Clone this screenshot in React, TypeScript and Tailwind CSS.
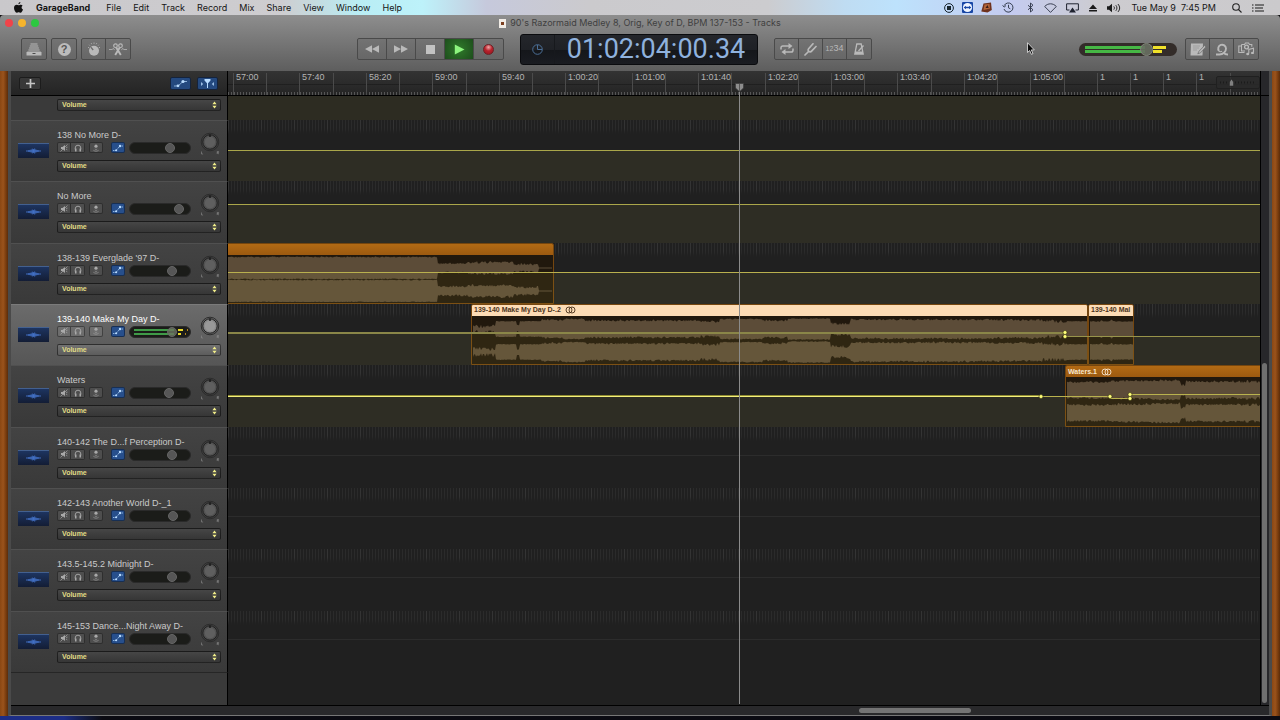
import type { ReactNode } from "react";
import clsx from "clsx";

type Point = [number, number];
type Segment = { to: number; amp: number; rough?: number };
type Clip = {
  left: number;
  width: number;
  title: string;
  selected?: boolean;
  looped?: boolean;
  segments: Segment[];
};
type Track = {
  name: string;
  volume: number;
  selected?: boolean;
  automation?: Point[];
  lineColor?: string;
  thick?: boolean;
  nodes?: Point[];
  clips?: Clip[];
};

const END = 4000;

const tracks: Track[] = [
  { name: "138 No More D-", volume: 69, automation: [[0, 30], [END, 30]], lineColor: "#aaa64a" },
  { name: "No More", volume: 87, automation: [[0, 23], [END, 23]], lineColor: "#aaa64a" },
  {
    name: "138-139 Everglade '97 D-",
    volume: 73,
    automation: [[0, 29], [END, 29]],
    lineColor: "#b9b04e",
    clips: [
      {
        left: -2,
        width: 328,
        title: "",
        segments: [
          { to: 210, amp: 11.5, rough: 1 },
          { to: 240, amp: 5.5, rough: 2 },
          { to: 286, amp: 7, rough: 2.5 },
          { to: 311, amp: 5, rough: 2.5 },
          { to: 325, amp: 0.4, rough: 0 },
        ],
      },
    ],
  },
  {
    name: "139-140 Make My Day D-",
    volume: 73,
    selected: true,
    automation: [[0, 29], [837, 29], [837, 32], [END, 32]],
    lineColor: "#98944a",
    nodes: [[837, 28], [837, 32]],
    clips: [
      {
        left: 243,
        width: 617,
        title: "139-140 Make My Day D-.2",
        selected: true,
        looped: true,
        segments: [
          { to: 23, amp: 5, rough: 4 },
          { to: 44, amp: 8, rough: 0.5 },
          { to: 47, amp: 4.5, rough: 3 },
          { to: 69, amp: 8, rough: 0.5 },
          { to: 91, amp: 10, rough: 2 },
          { to: 112, amp: 10.5, rough: 1 },
          { to: 228, amp: 9.5, rough: 2 },
          { to: 247, amp: 9, rough: 3 },
          { to: 290, amp: 10.5, rough: 1 },
          { to: 315, amp: 9.5, rough: 2 },
          { to: 358, amp: 11, rough: 1 },
          { to: 378, amp: 7, rough: 3 },
          { to: 520, amp: 10.5, rough: 2 },
          { to: 570, amp: 10, rough: 2 },
          { to: 594, amp: 10, rough: 4 },
          { to: 616, amp: 8, rough: 0.5 },
        ],
      },
      {
        left: 860,
        width: 46,
        title: "139-140 Mal",
        selected: true,
        segments: [
          { to: 11, amp: 8, rough: 0.8 },
          { to: 13, amp: 9, rough: 0.5 },
          { to: 21, amp: 8, rough: 0.8 },
          { to: 23, amp: 9.5, rough: 0.5 },
          { to: 44, amp: 8, rough: 0.8 },
        ],
      },
    ],
  },
  {
    name: "Waters",
    volume: 67,
    automation: [[0, 31], [882, 31], [882, 33], [902, 33], [902, 29], [END, 29]],
    lineColor: "#b9b24e",
    thick: true,
    nodes: [[813, 31], [882, 31], [902, 29], [902, 33]],
    clips: [
      {
        left: 837,
        width: 1200,
        title: "Waters.1",
        looped: true,
        segments: [
          { to: 45, amp: 9, rough: 2 },
          { to: 84, amp: 10, rough: 2.5 },
          { to: 114, amp: 10.5, rough: 2 },
          { to: 119, amp: 7, rough: 3 },
          { to: 165, amp: 9.5, rough: 2 },
          { to: 1200, amp: 10, rough: 3 },
        ],
      },
    ],
  },
  { name: "140-142 The D...f Perception D-", volume: 73 },
  { name: "142-143 Another World D-_1", volume: 75 },
  { name: "143.5-145.2 Midnight D-", volume: 73 },
  { name: "145-153 Dance...Night Away D-", volume: 73 },
];

const rulerLabels = [
  "57:00", "", "57:40", "", "58:20", "", "59:00", "", "59:40", "",
  "1:00:20", "", "1:01:00", "", "1:01:40", "", "1:02:20", "", "1:03:00", "",
  "1:03:40", "", "1:04:20", "", "1:05:00", "", "1", "1", "1", "1", "",
];
const menus = ["File", "Edit", "Track", "Record", "Mix", "Share", "View", "Window", "Help"];

// repeatable noise so that the wave forms look the same on every render
const noise = (n: number) => {
  const s = Math.sin(n * 12.9898) * 43758.5453;
  return s - Math.floor(s);
};

function channelPath(segments: Segment[], center: number, seed: number) {
  const top: string[] = [];
  const bottom: string[] = [];
  let x = 1;
  for (const { to, amp, rough = 1 } of segments) {
    for (; x <= to; x++) {
      top.push(`${x},${(center - amp + noise(x + seed) * rough).toFixed(1)}`);
      bottom.unshift(`${x},${(center + amp - noise(x * 2 + seed) * rough).toFixed(1)}`);
    }
  }
  return `M${top.join(" ")} ${bottom.join(" ")}Z`;
}

function automationArea(points: Point[]) {
  return `M${points.map((p) => p.join(",")).join(" ")} ${END},100 0,100Z`;
}

function LoopGlyph() {
  return (
    <svg className="h-2 w-[11px] shrink-0" viewBox="0 0 11 8" fill="none" stroke="currentColor" strokeWidth="0.9">
      <circle cx="4" cy="4" r="3" />
      <circle cx="7" cy="4" r="3" />
    </svg>
  );
}

function ClipRegion({ clip }: { clip: Clip }) {
  return (
    <div
      className="absolute inset-y-0 flex flex-col overflow-hidden rounded-t-[2px] border border-[#75460f] bg-[#21180d]"
      style={{ left: clip.left, width: clip.width }}
    >
      <div
        className={clsx(
          "flex h-[11px] shrink-0 items-center gap-1 pl-[2px] text-[7px] font-bold whitespace-nowrap",
          clip.selected ? "bg-[#fddcb5] text-[#4b321b]" : "bg-linear-to-b from-[#b26a14] to-[#9c5a10] text-[#f7e7cf]",
        )}
      >
        {clip.title}
        {clip.looped && <LoopGlyph />}
      </div>
      <svg className="mt-px h-[46px] w-full shrink-0" fill="#5c4c38">
        <path d={channelPath(clip.segments, 12, 3)} />
        <path d={channelPath(clip.segments, 35, 71)} />
      </svg>
    </div>
  );
}

function Lane({ track }: { track: Track }) {
  const { automation, clips = [], nodes = [] } = track;
  return (
    <div className="relative min-w-0 flex-1 overflow-hidden bg-[#202020]">
      <div className="h-[14px] bg-[repeating-linear-gradient(90deg,#343434_0_1px,transparent_1px_33px),repeating-linear-gradient(90deg,#2b2b2b_0_1px,transparent_1px_3px)] mask-b-from-60%" />
      {clips.map((clip) => (
        <ClipRegion key={clip.left} clip={clip} />
      ))}
      <svg className="absolute inset-0 size-full">
        {automation ? (
          <>
            <path d={automationArea(automation)} fill="#d6d25e" fillOpacity="0.08" />
            <polyline
              points={automation.map(([x, y]) => `${x},${y + 0.5}`).join(" ")}
              fill="none"
              stroke={track.lineColor}
            />
            {track.thick && (
              <g>
                <rect y="30" width="813" height="2" fill="#8f8b32" />
                <rect y="31" width="813" height="1" fill="#f4f07c" />
              </g>
            )}
            {track.selected && <rect y="28" width="837" height="2" fill="#8a8648" />}
            {nodes.map(([x, y]) => (
              <circle key={`${x}-${y}`} cx={x} cy={y + 0.5} r="2" fill="#ffff7a" stroke="#33310f" strokeWidth="0.6" />
            ))}
          </>
        ) : (
          <rect y="28" width={END} height="1" fill="#2c2c2c" />
        )}
      </svg>
    </div>
  );
}

function AutomationGlyph() {
  return (
    <svg className="h-2 w-3" viewBox="0 0 12 8" fill="#b9dcff" stroke="#b9dcff">
      <path d="M1 6.5h3L8 2h3" fill="none" strokeWidth="0.7" strokeDasharray="1.5 0.6" />
      <circle cx="4.2" cy="6.2" r="1" stroke="none" />
      <circle cx="8" cy="2" r="1.2" stroke="none" />
    </svg>
  );
}

function MiniButton({ label, className, children }: { label: string; className?: string; children: ReactNode }) {
  return (
    <button
      aria-label={label}
      className={clsx("flex h-[11px] w-[14px] items-center justify-center border border-black/40 text-[#a9a9a9]", className)}
    >
      {children}
    </button>
  );
}

function VolumePopup({ name, selected }: { name: string; selected?: boolean }) {
  return (
    <div className="relative h-3 w-[164px]">
      <select
        aria-label={`${name} automation parameter`}
        className={clsx(
          "block h-3 w-full appearance-none rounded-[2px] border border-black/50 px-1 text-[7px] leading-[10px] font-bold text-[#e0dd86]",
          selected ? "bg-linear-to-b from-[#727272] to-[#5c5c5c]" : "bg-linear-to-b from-[#464646] to-[#363636]",
        )}
      >
        <option>Volume</option>
        <option>Pan</option>
      </select>
      <svg className="pointer-events-none absolute top-[2px] right-1 h-2 w-[5px]" viewBox="0 0 5 8" fill="#f2ef8a">
        <path d="M2.5 0.6 4.6 3.2H0.4ZM2.5 7.4 4.6 4.8H0.4Z" />
      </svg>
    </div>
  );
}

function TrackFader({ track }: { track: Track }) {
  return (
    <div className="relative ml-1 h-3 w-[62px] overflow-hidden rounded-full border border-[#2a2a2a] bg-[#1b1c19]">
      {track.selected && (
        <div className="flex h-full flex-col justify-center gap-[2px] pl-1">
          <div className="flex gap-1">
            <i className="h-[2px] w-10 bg-[#3f9a48]" />
            <i className="h-[2px] w-[5px] bg-[#e8d928]" />
            <i className="h-[2px] w-px bg-[#b08420]" />
          </div>
          <div className="flex gap-1">
            <i className="h-[2px] w-10 bg-[#3f9a48]" />
            <i className="h-[2px] w-[3px] bg-[#e8d928]" />
            <i className="h-[2px] w-px bg-[#b08420]" />
          </div>
        </div>
      )}
      <input
        type="range"
        aria-label={`${track.name} volume`}
        defaultValue={track.volume}
        className={clsx(
          "absolute inset-0 size-full appearance-none bg-transparent",
          "[&::-webkit-slider-thumb]:size-[10px] [&::-webkit-slider-thumb]:appearance-none [&::-webkit-slider-thumb]:rounded-full [&::-webkit-slider-thumb]:border [&::-webkit-slider-thumb]:border-[#666]",
          track.selected ? "[&::-webkit-slider-thumb]:bg-[#6d7562]/80" : "[&::-webkit-slider-thumb]:bg-[#565656]",
        )}
      />
    </div>
  );
}

function PanKnob({ selected }: { selected?: boolean }) {
  return (
    <button aria-label="Pan" className="mt-[9px] ml-[10px] h-[26px] w-5">
      <svg viewBox="0 0 20 26" className="h-[26px] w-5" fill="none">
        <circle cx="10" cy="12" r="8.8" stroke="#2c2c2c" />
        <circle cx="10" cy="12" r="7.2" fill={selected ? "#8a8a8a" : "#525252"} stroke="#222" />
        <circle cx="10" cy="12" r="5.2" fill={selected ? "#989898" : "#5f5f5f"} />
        <path d="M10 4.500v2.500" stroke="#151515" strokeWidth="1.400" />
        <path d="M1.500 21.500v2.500h1.600M17.200 24v-2.500h1.400v1.200h-1.300l1.600 1.300" stroke="#8f8f8f" strokeWidth="0.600" />
      </svg>
    </button>
  );
}

function TrackHeader({ track }: { track: Track }) {
  const face = "bg-white/8";
  return (
    <div
      className={clsx(
        "flex w-[217px] shrink-0 border-t border-r border-r-black",
        track.selected
          ? "border-t-[#7a7a7a] bg-linear-to-b from-[#6b6b6b] to-[#565656]"
          : "border-t-[#505050] bg-linear-to-b from-[#434343] to-[#393939]",
      )}
    >
      <div className="mt-[22px] ml-[7px] flex h-[15px] w-[31px] shrink-0 items-center justify-center border-t border-[#43608f] bg-linear-to-b from-[#1d3460] to-[#131d35]">
        <svg className="h-2 w-[15px]" viewBox="0 0 19 8" stroke="#4677d0" strokeWidth="1.1">
          <path d="M0 4h19M3.5 3v2M5 2.6v2.8M6.500 2v4M8 1v6M9.500 1.600v4.800M11 .8v6.400M12.500 2v4M14 2.700v2.600M15.500 3.200v1.600" />
        </svg>
      </div>
      <div className="ml-2 flex flex-col pt-2">
        <h2
          className={clsx(
            "text-[9px] leading-[13px] whitespace-nowrap",
            track.selected ? "text-white" : "text-[#cacaca]",
          )}
        >
          {track.name}
        </h2>
        <div className="flex h-3 items-start">
          <MiniButton label="Mute" className={clsx(face, "rounded-l-[2px]")}>
            <svg className="size-2" viewBox="0 0 8 8" fill="currentColor" stroke="currentColor">
              <path d="M1 3h1.500L5 1v6L2.500 5H1Z" stroke="none" />
              <path d="M.5 7.500 7.500.5M6 3.500l1.500-.4M6 5l1.300.8" fill="none" strokeWidth="0.700" />
            </svg>
          </MiniButton>
          <MiniButton label="Solo" className={clsx(face, "rounded-r-[2px] border-l-0")}>
            <svg className="size-2" viewBox="0 0 8 8" fill="currentColor" stroke="currentColor">
              <path d="M1.200 5.500V4a2.800 2.800 0 0 1 5.600 0v1.500" fill="none" strokeWidth="0.900" />
              <path d="M1 4.500h1.500v3H1ZM5.500 4.500H7v3H5.500Z" stroke="none" />
            </svg>
          </MiniButton>
          <MiniButton label="Input monitoring" className={clsx(face, "ml-1 rounded-[2px]")}>
            <svg className="size-2" viewBox="0 0 8 8" fill="none" stroke="currentColor" strokeWidth="0.600">
              <circle cx="4" cy="2.200" r="1.600" fill="currentColor" stroke="none" />
              <path d="M2.800 5c.8.600 1.600.600 2.400 0M1.400 6.300c1.800 1.200 3.400 1.200 5.200 0" />
            </svg>
          </MiniButton>
          <MiniButton label="Automation" className="ml-2 rounded-[2px] bg-[#274f8c]">
            <AutomationGlyph />
          </MiniButton>
          <TrackFader track={track} />
        </div>
        <div className="mt-[6px]">
          <VolumePopup name={track.name} selected={track.selected} />
        </div>
      </div>
      <div className="-ml-[31px]">
        <PanKnob selected={track.selected} />
      </div>
    </div>
  );
}

function MenuBar() {
  return (
    <header className="flex h-[15px] items-center bg-[linear-gradient(90deg,#c9c8cb_0%,#cecdd0_22%,#b9edf4_28%,#bdf2fa_33%,#c6c9dc_38%,#cbcacd_46%,#cccccf_60%,#bfdcf2_66%,#bde2fc_70%,#c4cbf0_79%,#cdccd0_86%,#cbcacc_100%)] px-[14px] font-[Inter,sans-serif] text-[9px] text-[#151515]">
      <svg className="h-[11px] w-[9px]" viewBox="0 0 9 11" fill="#111">
        <path d="M6.400 0c.1 1.200-.9 2.300-2 2.300C4.300 1.200 5.300.1 6.400 0ZM8.600 3.700C7.100 4.600 7.300 6.800 9 7.500 8.600 8.800 7.600 10.700 6.500 10.700c-.8 0-1-.5-1.900-.5s-1.200.5-1.900.5C1.400 10.700 0 8.200 0 6.100c0-2.200 1.400-3.300 2.700-3.300.8 0 1.500.5 2 .5s1.200-.6 2.200-.6c.7 0 1.300.4 1.700 1Z" />
      </svg>
      <nav className="ml-[13px] flex items-center gap-3">
        <button className="mr-1 font-bold">GarageBand</button>
        {menus.map((menu) => (
          <button key={menu}>{menu}</button>
        ))}
      </nav>
      <div className="ml-auto flex items-center gap-[10px]">
        <svg className="size-[10px]" viewBox="0 0 10 10" fill="none" stroke="#16232b">
          <circle cx="5" cy="5" r="4.400" />
          <path d="M3 3h4v4H3Z" fill="#16232b" stroke="none" />
        </svg>
        <svg className="-mx-[2px] size-[11px]" viewBox="0 0 11 11">
          <rect width="11" height="11" rx="1" fill="#1746a5" />
          <circle cx="5.500" cy="5.500" r="4.600" fill="#eef4ff" />
          <path d="M1.600 5.500 4 3.700v1.100h3V3.700l2.400 1.800L7 7.300V6.200H4v1.100Z" fill="#1746a5" />
        </svg>
        <svg className="size-[11px]" viewBox="0 0 11 11">
          <path d="M2.500 1.500 10 .5 10.800 8 6.500 10.500.3 9.500Z" fill="#6f321e" />
          <path d="M3.500 2.500 8.500 2l.5 4.500-6.500 1.500Z" fill="#b5663a" />
          <path d="M4.500 6 6.500 3l1.200 3Z" fill="#3a1b16" />
        </svg>
        <svg className="h-[11px] w-3" viewBox="0 0 12 11" fill="none" stroke="#26303f" strokeWidth="0.900">
          <path d="M2.200 3.600A4.600 4.600 0 1 1 2 7M.6 3.400l1.600 1.700L4 3.500M6.500 2.800v3l1.800 1" />
        </svg>
        <svg className="ml-[3px] h-[11px] w-[7px]" viewBox="0 0 7 11" fill="none" stroke="#2b3244" strokeWidth="0.900">
          <path d="M1 3.200 6 7.800 3.500 10V1L6 3.200 1 7.800" />
        </svg>
        <svg className="h-[10px] w-[13px]" viewBox="0 0 13 10" fill="none" stroke="#2b3244" strokeWidth="0.900">
          <path d="M.7 3.500C4-.1 9-.1 12.300 3.500L6.500 9.400Z" />
        </svg>
        <svg className="-ml-px h-[10px] w-[13px]" viewBox="0 0 13 10" fill="none" stroke="#1f2330">
          <path d="M3.500 7H.6V.8h11.800V7H9.500" />
          <path d="M6.500 4.500 10 9.500H3Z" fill="#1f2330" stroke="none" />
        </svg>
        <svg className="h-2 w-2" viewBox="0 0 8 8" fill="#1a1a1a">
          <path d="M4 0.500 8 5H0ZM0 6h8v1.500H0Z" />
        </svg>
        <svg className="h-[10px] w-[14px]" viewBox="0 0 14 10" fill="none" stroke="#1a1a1a" strokeWidth="0.900">
          <path d="M0 3.300h2L5 .8v8.400L2 6.700H0Z" fill="#1a1a1a" stroke="none" />
          <path d="M6.800 3.400c.8 1 .8 2.200 0 3.200M8.800 2.200c1.500 1.800 1.500 3.800 0 5.600M10.900 1c2.300 2.600 2.300 5.400 0 8" />
        </svg>
        <time className="whitespace-pre">Tue May 9  7:45 PM</time>
        <svg className="ml-[6px] size-[10px]" viewBox="0 0 10 10" fill="none" stroke="#222" strokeWidth="1.100">
          <circle cx="4" cy="4" r="3.300" />
          <path d="m6.500 6.500 3 3" />
        </svg>
        <svg className="mr-[2px] h-2 w-3" viewBox="0 0 12 8" stroke="#1a1a1a" strokeWidth="1.200">
          <path d="M0 1h1.500M3 1h9M0 4h1.500M3 4h8M0 7h1.500M3 7h9" />
        </svg>
      </div>
    </header>
  );
}

function ToolGroup({ children }: { children: ReactNode }) {
  return (
    <div className="flex h-[22px] divide-x divide-[#4a4a4a] overflow-hidden rounded-[2px] border border-[#4a4a4a] bg-linear-to-b from-[#737373] to-[#676767] text-[#b9b9b9]">
      {children}
    </div>
  );
}

function ToolButton({ label, wide, className, children }: { label: string; wide?: boolean; className?: string; children: ReactNode }) {
  return (
    <button aria-label={label} className={clsx("flex h-full items-center justify-center", wide ? "w-[29px]" : "w-6", className)}>
      {children}
    </button>
  );
}

function Toolbar() {
  return (
    <div className="flex h-10 items-center px-[21px] pb-1">
      <div className="flex w-[336px] shrink-0 gap-1">
        <ToolGroup>
          <ToolButton label="Library">
            <svg className="h-[13px] w-4" viewBox="0 0 16 13" fill="none" stroke="currentColor">
              <path d="M4.500 1h7M3.800 3h8.400M3.100 5h9.800M2.400 7h11.200" strokeWidth="1.100" />
              <path d="M1.500 8.500h13l1 1v3H.5v-3Z" fill="currentColor" stroke="none" />
              <path d="M6.500 10.500h3" stroke="#4c4c4c" />
            </svg>
          </ToolButton>
        </ToolGroup>
        <ToolGroup>
          <ToolButton label="Quick help">
            <span className="flex size-[13px] items-center justify-center rounded-full bg-[#bcbcbc] text-[11px] leading-none font-bold text-[#555]">?</span>
          </ToolButton>
        </ToolGroup>
        <ToolGroup>
          <ToolButton label="Smart controls">
            <svg className="size-[14px]" viewBox="0 0 14 14" fill="currentColor" stroke="currentColor">
              <circle cx="7" cy="8.800" r="5" stroke="none" />
              <path d="M1 5.200l.8.500M2.200 2.800l.6.700M4.300 1.300l.4.900M7 .6v1.100M9.700 1.300l-.4.900M11.800 2.800l-.6.700M13 5.200l-.8.500" />
              <path d="M3.800 5.200 6.200 8" stroke="#6b6b6b" strokeWidth="1.300" />
            </svg>
          </ToolButton>
          <ToolButton label="Editors">
            <svg className="h-[13px] w-[18px]" viewBox="0 0 18 13" fill="none" stroke="currentColor" strokeWidth="1.200">
              <circle cx="6.500" cy="2.700" r="1.800" />
              <circle cx="11.500" cy="2.700" r="1.800" />
              <path d="M7.200 4.400 11.800 12M10.800 4.400 6.200 12" strokeWidth="1.900" />
              <path d="M0 6.500h3l1.500-1 1 1.600M18 6.500h-3l-1.500-1-1 1.600" strokeWidth="0.800" />
            </svg>
          </ToolButton>
        </ToolGroup>
      </div>

      <div className="flex shrink-0 items-center gap-4">
        <ToolGroup>
          <ToolButton label="Rewind" wide>
            <svg className="h-2 w-[14px]" viewBox="0 0 14 8" fill="currentColor">
              <path d="M7 .3v7.400L0 4ZM14 .3v7.400L7 4Z" />
            </svg>
          </ToolButton>
          <ToolButton label="Forward" wide>
            <svg className="h-2 w-[14px]" viewBox="0 0 14 8" fill="currentColor">
              <path d="M0 .3v7.400L7 4ZM7 .3v7.400L14 4Z" />
            </svg>
          </ToolButton>
          <ToolButton label="Stop" wide>
            <span className="size-[9px] bg-[#c2c2c2]" />
          </ToolButton>
          <ToolButton label="Play" wide className="bg-[radial-gradient(circle,#2f7a2a,#1d4d1c)] text-[#8df57e]">
            <svg className="size-[11px]" viewBox="0 0 11 11" fill="currentColor">
              <path d="M.8.500v10L10.500 5.500Z" />
            </svg>
          </ToolButton>
          <ToolButton label="Record" wide>
            <span className="size-[11px] rounded-full border border-[#6d2226] bg-[radial-gradient(circle_at_50%_25%,#f0a9a9,#b8222c_45%,#96151f)]" />
          </ToolButton>
        </ToolGroup>

        <div className="flex h-[31px] w-[238px] items-center rounded-[3px] border border-[#0a0b0e] bg-[linear-gradient(#24262b_0%,#1f2126_50%,#14161a_51%,#1a1c21_100%)] text-[#8fb2de]">
          <button aria-label="Display mode" className="flex h-full w-[34px] items-center justify-center border-r border-[#17191d]">
            <svg className="size-[11px]" viewBox="0 0 11 11" fill="none" stroke="#4b6f97">
              <circle cx="5.500" cy="5.500" r="4.800" />
              <path d="M5.500 1v4.500H10" />
            </svg>
          </button>
          <output className="flex-1 text-center font-[Roboto,sans-serif] text-[27px] leading-none">01:02:04:00.34</output>
        </div>

        <ToolGroup>
          <ToolButton label="Cycle">
            <svg className="h-3 w-[14px]" viewBox="0 0 14 12" fill="none" stroke="currentColor" strokeWidth="1.500">
              <path d="M1 6.500V4.800C1 3.700 1.700 3 2.800 3H9M13 5.500v1.700c0 1.100-.7 1.800-1.800 1.800H5" />
              <path d="M8.500 0v6l4-3ZM5.500 6v6l-4-3Z" fill="currentColor" stroke="none" />
            </svg>
          </ToolButton>
          <ToolButton label="Tuner">
            <svg className="size-[13px]" viewBox="0 0 13 13" fill="none" stroke="currentColor" strokeWidth="1.700" strokeLinecap="round">
              <path d="M1 12 4.500 8.500M9 .8 4.800 5.500c-.9 1-.9 2 0 2.800s2 .8 2.800-.2L12 3.500" />
            </svg>
          </ToolButton>
          <ToolButton label="Count in">
            <span className="text-[7px]">12</span>
            <span className="text-[9px]">34</span>
          </ToolButton>
          <ToolButton label="Metronome">
            <svg className="size-3" viewBox="0 0 12 12" fill="none" stroke="currentColor" strokeWidth="1.300">
              <path d="M3.800 1h4.400l2 10H1.800Z" />
              <path d="M2.200 8.500h7.600l.4 2.500H1.800Z" fill="currentColor" stroke="none" />
              <path d="M5.500 8 10.500 2.500" />
            </svg>
          </ToolButton>
        </ToolGroup>
      </div>

      <div className="ml-auto flex shrink-0 items-center gap-2">
        <div className="relative h-[13px] w-[98px] overflow-hidden rounded-full bg-[#332c29]">
          <div className="flex h-full flex-col justify-center gap-px pl-[6px]">
            <div className="flex gap-2">
              <i className="h-[3px] w-[60px] bg-[#46b845]" />
              <i className="h-[3px] w-[13px] bg-[#f0e12a]" />
            </div>
            <div className="flex gap-2">
              <i className="h-[3px] w-[60px] bg-[#46b845]" />
              <i className="h-[3px] w-[9px] bg-[#f0e12a]" />
            </div>
          </div>
          <input
            type="range"
            aria-label="Master volume"
            defaultValue={72}
            className="absolute inset-0 size-full appearance-none bg-transparent [&::-webkit-slider-thumb]:size-[13px] [&::-webkit-slider-thumb]:appearance-none [&::-webkit-slider-thumb]:rounded-full [&::-webkit-slider-thumb]:border [&::-webkit-slider-thumb]:border-[#80867a] [&::-webkit-slider-thumb]:bg-[#686f62]/90"
          />
        </div>
        <ToolGroup>
          <ToolButton label="Note pad">
            <svg className="h-[13px] w-4" viewBox="0 0 16 13" fill="currentColor">
              <path d="M1 .5h12l-.5 12H.5Z" />
              <path d="M3 3h7M3 5h6M3 7h4" stroke="#8f8f8f" strokeWidth="0.600" />
              <path d="M14.800 2.300 9 8.200l-1.200 2.600 2.700-1L15.800 4Z" stroke="#6a6a6a" strokeWidth="0.700" />
            </svg>
          </ToolButton>
          <ToolButton label="Loop browser">
            <svg className="h-[13px] w-[14px]" viewBox="0 0 14 13" fill="none" stroke="currentColor" strokeWidth="1.900">
              <path d="M1 11.500h3.500c3.500 0 6.500-2.500 6.500-6A3.900 3.900 0 1 0 4 8" />
              <path d="M4 8c.8 1 2.200 1 2.900 0" strokeWidth="1.200" />
              <path d="M9 10c.8 1.200 2 1.600 4 1.500" />
            </svg>
          </ToolButton>
          <ToolButton label="Media browser">
            <svg className="h-[14px] w-[17px]" viewBox="0 0 17 14" fill="none" stroke="currentColor" strokeWidth="1.100">
              <path d="M3.500 4H.8v6.500h5.700M3.500 2.500h3L7.500 1h3l1 1.500h2.300v2.200M3.500 2.500V9H7" />
              <circle cx="8.500" cy="5" r="1.900" strokeWidth="1.400" />
              <path d="M10.800 11.500V7.500l4.700-1.200v4.200" />
              <ellipse cx="9.700" cy="12" rx="1.500" ry="1.200" fill="currentColor" stroke="none" />
              <ellipse cx="14.500" cy="10.900" rx="1.500" ry="1.200" fill="currentColor" stroke="none" />
            </svg>
          </ToolButton>
        </ToolGroup>
      </div>
    </div>
  );
}

function Ruler() {
  return (
    <div className="flex h-[25px] shrink-0 border-b border-black bg-linear-to-b from-[#333] to-[#242424]">
      <div className="flex w-[217px] shrink-0 items-center border-r border-black pr-[9px] pl-2">
        <button aria-label="Add track" className="flex h-[13px] w-[22px] items-center justify-center rounded-[2px] border border-[#1c1c1c] bg-[#383838]">
          <svg className="size-[9px]" viewBox="0 0 9 9" stroke="#c4c4c4" strokeWidth="1.700">
            <path d="M4.500 0v9M0 4.500h9" />
          </svg>
        </button>
        <button aria-label="Show automation" className="ml-auto flex h-[13px] w-[21px] items-center justify-center rounded-[2px] border border-[#15233b] bg-[#24497f]">
          <svg className="h-[9px] w-[15px]" viewBox="0 0 15 9" fill="#b9dcff">
            <path d="M1 7h4l5-4.500h4" fill="none" stroke="#b9dcff" strokeWidth="0.700" />
            <circle cx="5" cy="6.800" r="1.400" />
            <circle cx="10" cy="2.500" r="1.600" />
          </svg>
        </button>
        <button aria-label="Catch playhead" className="ml-[6px] flex h-[13px] w-[21px] items-center justify-center rounded-[2px] border border-[#15233b] bg-[#24497f]">
          <svg className="h-[9px] w-[15px]" viewBox="0 0 15 9" fill="#b9dcff">
            <path d="M4.500 0h6v1.500L8 4.200V9H7V4.200L4.500 1.500Z" />
            <path d="M1 3v4l2.200-2ZM14 3v4l-2.200-2Z" opacity="0.800" />
          </svg>
        </button>
      </div>
      <div className="relative flex min-w-0 flex-1 overflow-hidden border-r border-black">
        <div className="absolute inset-x-0 bottom-0 h-[3px] bg-[repeating-linear-gradient(90deg,#555_0_1px,transparent_1px_3px)]" />
        <div className="absolute inset-x-0 top-[13px] h-px bg-black/25" />
        {rulerLabels.map((label, i) => (
          <span
            key={i}
            className="absolute top-[2px] bottom-0 border-l border-[#4b4b4b] pl-[2px] text-[9px] leading-[9px] text-[#b4b4b4]"
            style={{ left: 5 + Math.round(i * 33.22) }}
          >
            {label}
          </span>
        ))}
        <label className="absolute top-[5px] right-0 flex h-[13px] w-11 items-center justify-center rounded-[2px] border border-[#202020] bg-[#2a2a2a]/80">
          <input type="range" aria-label="Horizontal zoom" className="sr-only" defaultValue={35} />
          <svg className="h-[9px] w-10" viewBox="0 0 40 9" fill="none" stroke="#1b1b1b">
            <path d="M2 4.500h36" strokeDasharray="1 2" strokeWidth="2" />
            <path d="M11.500 4 13.500 1l2 3v4h-4Z" fill="#808080" stroke="#222" strokeWidth="0.500" />
          </svg>
        </label>
      </div>
      <div className="w-2 shrink-0 bg-[#27272a]" />
    </div>
  );
}

function Playhead() {
  return (
    <div className="pointer-events-none absolute top-[12px] bottom-[11px] left-[724px] flex w-[9px] flex-col items-center">
      <svg className="h-[9px] w-[9px] shrink-0" viewBox="0 0 9 9">
        <path d="M.5.500h8v4.500L4.500 8.700.5 5Z" fill="#8d8d8d" stroke="#3a3a3a" strokeWidth="0.700" />
        <path d="M4.500 1v7" stroke="#555" />
      </svg>
      <span className="w-px flex-1 bg-[#8b8b8b]" />
    </div>
  );
}

const wood = "w-2 shrink-0 bg-[linear-gradient(90deg,#8a4713,#9a531c_40%,#7d3f10_70%,#5a2c0a)]";

export default function App() {
  return (
    <div className="flex min-h-screen flex-col bg-[#0d0d10] font-['Liberation_Sans',Arial,sans-serif] select-none">
      <MenuBar />
      <div className="relative h-14 rounded-t-[4px] bg-linear-to-b from-[#8e8e8e] to-[#5e5e5e]">
        <div className="grid h-4 grid-cols-[1fr_auto_1fr] items-center px-[5px]">
          <div className="flex gap-[5px]">
            <button aria-label="Close" className="size-2 rounded-full bg-[#f0444a]" />
            <button aria-label="Minimize" className="size-2 rounded-full bg-[#f6b42c]" />
            <button aria-label="Zoom" className="size-2 rounded-full bg-[#2cc840]" />
          </div>
          <h1 className="flex items-center gap-1 font-[Inter,sans-serif] text-[9px] whitespace-nowrap text-[#3f3f3f]">
            <span className="flex h-[9px] w-[7px] items-center justify-center bg-[#f1ece6]">
              <span className="size-[3px] bg-[#7c3f1f]" />
            </span>
            90's Razormaid Medley 8, Orig, Key of D, BPM 137-153 - Tracks
          </h1>
        </div>
        <Toolbar />
        <svg className="absolute top-[27px] left-[1027px] h-[13px] w-2" viewBox="0 0 8 13">
          <path d="M.5.700v9.800l2.200-2 1.700 3.800 1.600-.7-1.700-3.700h3Z" fill="#0a0a0a" stroke="#e8e8e8" strokeWidth="0.800" />
        </svg>
      </div>

      <div className="flex flex-1">
        <div className={wood} />
        <main className="relative flex min-w-0 flex-1 flex-col border-x-[3px] border-b border-[#4a4a4a] border-b-[#777]">
          <Ruler />
          <div className="flex flex-1">
            <div className="flex min-w-0 flex-1 flex-col">
              <div className="flex h-6 shrink-0">
                <div className="w-[217px] shrink-0 border-r border-black bg-[#3a3a3a] pt-[3px] pl-[46px]">
                  <VolumePopup name="137 track" />
                </div>
                <div className="flex-1 bg-[#2d2c22]" />
              </div>
              {tracks.map((track) => (
                <section key={track.name} className="flex min-h-[60px] flex-1">
                  <TrackHeader track={track} />
                  <Lane track={track} />
                </section>
              ))}
              <div className="flex h-[33px] shrink-0">
                <div className="w-[217px] shrink-0 border-t border-r border-t-[#262626] border-r-black bg-[#3a3a3a]" />
                <div className="flex-1 bg-[#202020]" />
              </div>
            </div>
            <div className="flex w-[9px] shrink-0 flex-col justify-end border-l border-black bg-[#27272a] px-px pb-[2px]">
              <div className="h-[56%] w-[5px] rounded-full bg-[#6f6f6f]" />
            </div>
          </div>
          <div className="flex h-[10px] shrink-0 items-center border-t border-black bg-[#29292b] pl-[848px]">
            <div className="h-[5px] w-[112px] rounded-full bg-[#747474]" />
          </div>
          <Playhead />
        </main>
        <div className={wood} />
      </div>
      <div className="h-1 bg-linear-to-r from-[#1c2d86] from-5% to-[#0b0b12] to-8%" />
    </div>
  );
}
